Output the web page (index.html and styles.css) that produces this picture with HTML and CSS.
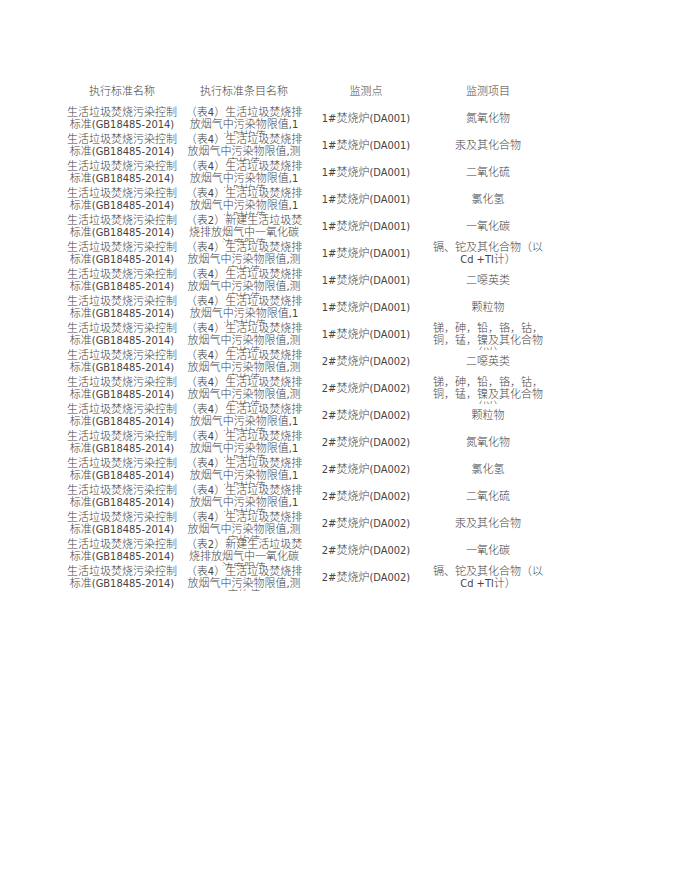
FILE: index.html
```html
<!DOCTYPE html>
<html lang="zh-CN">
<head>
<meta charset="utf-8">
<title>监测项目</title>
<link rel="stylesheet" href="styles.css">
</head>
<body>
<table class="sheet">
  <colgroup><col class="col"><col class="col"><col class="col"><col class="col"></colgroup>
  <thead>
    <tr>
      <th><div class="c"><div class="t">执行标准名称</div></div></th>
      <th><div class="c"><div class="t">执行标准条目名称</div></div></th>
      <th><div class="c"><div class="t">监测点</div></div></th>
      <th><div class="c"><div class="t">监测项目</div></div></th>
    </tr>
  </thead>
  <tbody>
    <tr>
      <td><div class="c"><div class="t">生活垃圾焚烧污染控制<br>标准(GB18485-2014)</div></div></td>
      <td><div class="c"><div class="t">（表4）生活垃圾焚烧排<br>放烟气中污染物限值,1<br>小时均值</div></div></td>
      <td><div class="c"><div class="t">1#焚烧炉(DA001)</div></div></td>
      <td><div class="c"><div class="t">氮氧化物</div></div></td>
    </tr>
    <tr>
      <td><div class="c"><div class="t">生活垃圾焚烧污染控制<br>标准(GB18485-2014)</div></div></td>
      <td><div class="c"><div class="t">（表4）生活垃圾焚烧排<br>放烟气中污染物限值,测<br>定均值</div></div></td>
      <td><div class="c"><div class="t">1#焚烧炉(DA001)</div></div></td>
      <td><div class="c"><div class="t">汞及其化合物</div></div></td>
    </tr>
    <tr>
      <td><div class="c"><div class="t">生活垃圾焚烧污染控制<br>标准(GB18485-2014)</div></div></td>
      <td><div class="c"><div class="t">（表4）生活垃圾焚烧排<br>放烟气中污染物限值,1<br>小时均值</div></div></td>
      <td><div class="c"><div class="t">1#焚烧炉(DA001)</div></div></td>
      <td><div class="c"><div class="t">二氧化硫</div></div></td>
    </tr>
    <tr>
      <td><div class="c"><div class="t">生活垃圾焚烧污染控制<br>标准(GB18485-2014)</div></div></td>
      <td><div class="c"><div class="t">（表4）生活垃圾焚烧排<br>放烟气中污染物限值,1<br>小时均值</div></div></td>
      <td><div class="c"><div class="t">1#焚烧炉(DA001)</div></div></td>
      <td><div class="c"><div class="t">氯化氢</div></div></td>
    </tr>
    <tr>
      <td><div class="c"><div class="t">生活垃圾焚烧污染控制<br>标准(GB18485-2014)</div></div></td>
      <td><div class="c"><div class="t">（表2）新建生活垃圾焚<br>烧排放烟气中一氧化碳<br>浓度限值</div></div></td>
      <td><div class="c"><div class="t">1#焚烧炉(DA001)</div></div></td>
      <td><div class="c"><div class="t">一氧化碳</div></div></td>
    </tr>
    <tr>
      <td><div class="c"><div class="t">生活垃圾焚烧污染控制<br>标准(GB18485-2014)</div></div></td>
      <td><div class="c"><div class="t">（表4）生活垃圾焚烧排<br>放烟气中污染物限值,测<br>定均值</div></div></td>
      <td><div class="c"><div class="t">1#焚烧炉(DA001)</div></div></td>
      <td><div class="c"><div class="t">镉、铊及其化合物（以<br>Cd +Tl计）</div></div></td>
    </tr>
    <tr>
      <td><div class="c"><div class="t">生活垃圾焚烧污染控制<br>标准(GB18485-2014)</div></div></td>
      <td><div class="c"><div class="t">（表4）生活垃圾焚烧排<br>放烟气中污染物限值,测<br>定均值</div></div></td>
      <td><div class="c"><div class="t">1#焚烧炉(DA001)</div></div></td>
      <td><div class="c"><div class="t">二噁英类</div></div></td>
    </tr>
    <tr>
      <td><div class="c"><div class="t">生活垃圾焚烧污染控制<br>标准(GB18485-2014)</div></div></td>
      <td><div class="c"><div class="t">（表4）生活垃圾焚烧排<br>放烟气中污染物限值,1<br>小时均值</div></div></td>
      <td><div class="c"><div class="t">1#焚烧炉(DA001)</div></div></td>
      <td><div class="c"><div class="t">颗粒物</div></div></td>
    </tr>
    <tr>
      <td><div class="c"><div class="t">生活垃圾焚烧污染控制<br>标准(GB18485-2014)</div></div></td>
      <td><div class="c"><div class="t">（表4）生活垃圾焚烧排<br>放烟气中污染物限值,测<br>定均值</div></div></td>
      <td><div class="c"><div class="t">1#焚烧炉(DA001)</div></div></td>
      <td><div class="c"><div class="t">锑，砷，铅，铬，钴，<br>铜，锰，镍及其化合物<br>（以）</div></div></td>
    </tr>
    <tr>
      <td><div class="c"><div class="t">生活垃圾焚烧污染控制<br>标准(GB18485-2014)</div></div></td>
      <td><div class="c"><div class="t">（表4）生活垃圾焚烧排<br>放烟气中污染物限值,测<br>定均值</div></div></td>
      <td><div class="c"><div class="t">2#焚烧炉(DA002)</div></div></td>
      <td><div class="c"><div class="t">二噁英类</div></div></td>
    </tr>
    <tr>
      <td><div class="c"><div class="t">生活垃圾焚烧污染控制<br>标准(GB18485-2014)</div></div></td>
      <td><div class="c"><div class="t">（表4）生活垃圾焚烧排<br>放烟气中污染物限值,测<br>定均值</div></div></td>
      <td><div class="c"><div class="t">2#焚烧炉(DA002)</div></div></td>
      <td><div class="c"><div class="t">锑，砷，铅，铬，钴，<br>铜，锰，镍及其化合物<br>（以）</div></div></td>
    </tr>
    <tr>
      <td><div class="c"><div class="t">生活垃圾焚烧污染控制<br>标准(GB18485-2014)</div></div></td>
      <td><div class="c"><div class="t">（表4）生活垃圾焚烧排<br>放烟气中污染物限值,1<br>小时均值</div></div></td>
      <td><div class="c"><div class="t">2#焚烧炉(DA002)</div></div></td>
      <td><div class="c"><div class="t">颗粒物</div></div></td>
    </tr>
    <tr>
      <td><div class="c"><div class="t">生活垃圾焚烧污染控制<br>标准(GB18485-2014)</div></div></td>
      <td><div class="c"><div class="t">（表4）生活垃圾焚烧排<br>放烟气中污染物限值,1<br>小时均值</div></div></td>
      <td><div class="c"><div class="t">2#焚烧炉(DA002)</div></div></td>
      <td><div class="c"><div class="t">氮氧化物</div></div></td>
    </tr>
    <tr>
      <td><div class="c"><div class="t">生活垃圾焚烧污染控制<br>标准(GB18485-2014)</div></div></td>
      <td><div class="c"><div class="t">（表4）生活垃圾焚烧排<br>放烟气中污染物限值,1<br>小时均值</div></div></td>
      <td><div class="c"><div class="t">2#焚烧炉(DA002)</div></div></td>
      <td><div class="c"><div class="t">氯化氢</div></div></td>
    </tr>
    <tr>
      <td><div class="c"><div class="t">生活垃圾焚烧污染控制<br>标准(GB18485-2014)</div></div></td>
      <td><div class="c"><div class="t">（表4）生活垃圾焚烧排<br>放烟气中污染物限值,1<br>小时均值</div></div></td>
      <td><div class="c"><div class="t">2#焚烧炉(DA002)</div></div></td>
      <td><div class="c"><div class="t">二氧化硫</div></div></td>
    </tr>
    <tr>
      <td><div class="c"><div class="t">生活垃圾焚烧污染控制<br>标准(GB18485-2014)</div></div></td>
      <td><div class="c"><div class="t">（表4）生活垃圾焚烧排<br>放烟气中污染物限值,测<br>定均值</div></div></td>
      <td><div class="c"><div class="t">2#焚烧炉(DA002)</div></div></td>
      <td><div class="c"><div class="t">汞及其化合物</div></div></td>
    </tr>
    <tr>
      <td><div class="c"><div class="t">生活垃圾焚烧污染控制<br>标准(GB18485-2014)</div></div></td>
      <td><div class="c"><div class="t">（表2）新建生活垃圾焚<br>烧排放烟气中一氧化碳<br>浓度限值</div></div></td>
      <td><div class="c"><div class="t">2#焚烧炉(DA002)</div></div></td>
      <td><div class="c"><div class="t">一氧化碳</div></div></td>
    </tr>
    <tr>
      <td><div class="c"><div class="t">生活垃圾焚烧污染控制<br>标准(GB18485-2014)</div></div></td>
      <td><div class="c"><div class="t">（表4）生活垃圾焚烧排<br>放烟气中污染物限值,测<br>定均值</div></div></td>
      <td><div class="c"><div class="t">2#焚烧炉(DA002)</div></div></td>
      <td><div class="c"><div class="t">镉、铊及其化合物（以<br>Cd +Tl计）</div></div></td>
    </tr>
  </tbody>
</table>
</body>
</html>
```

FILE: styles.css
```css
html, body {
  margin: 0;
  padding: 0;
  background: #ffffff;
}

body {
  color: #444444;
  font-family: "Liberation Sans Narrow", "DejaVu Sans Condensed", "Liberation Sans", "Noto Sans CJK SC", sans-serif;
  font-size: 11px;
  font-weight: 300;
}

.sheet {
  margin: 78px 0 0 61px;
  border-collapse: collapse;
  border-spacing: 0;
  table-layout: fixed;
  width: 488px;
}

.sheet .col {
  width: 122px;
}

.sheet th,
.sheet td {
  padding: 0;
  font-weight: 300;
  vertical-align: top;
}

.c {
  height: 27px;
  display: flex;
  align-items: center;
  justify-content: center;
  overflow: clip;
  overflow-clip-margin: 2px;
}

.t {
  line-height: 12px;
  max-height: 24px;
  text-align: center;
  white-space: nowrap;
}
```
